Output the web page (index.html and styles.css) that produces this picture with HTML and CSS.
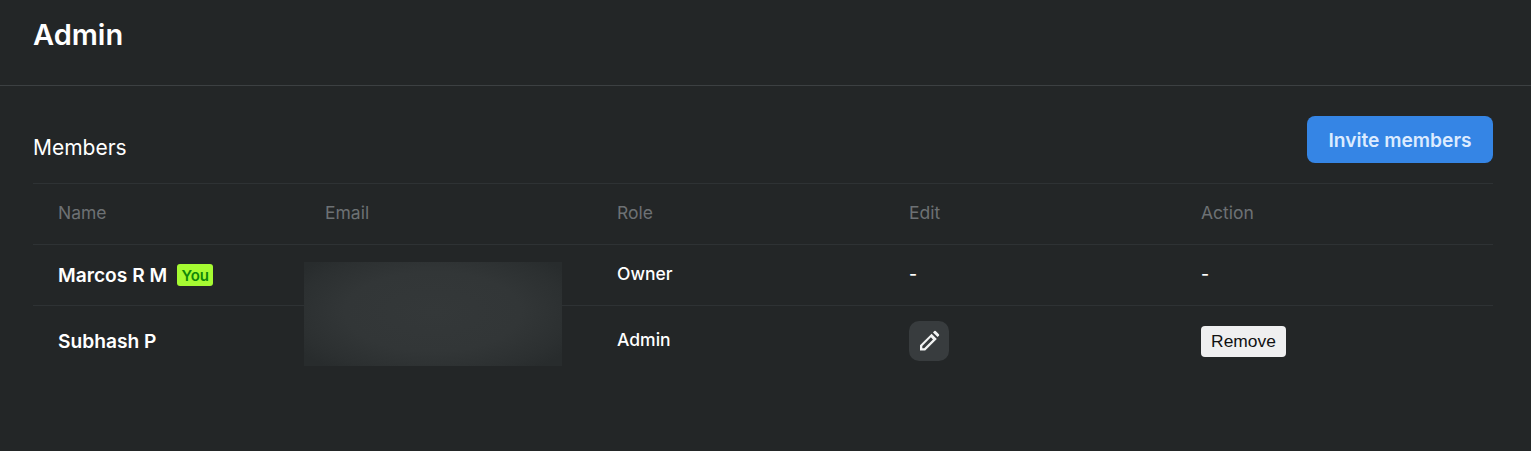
FILE: index.html
```html
<!DOCTYPE html>
<html lang="en">
<head>
<meta charset="utf-8">
<title>Admin</title>
<link rel="stylesheet" href="styles.css">
</head>
<body>
<header class="page-header"><h1 class="page-title">Admin</h1></header>
<main class="content">
  <div class="toolbar">
    <h2 class="section-title">Members</h2>
    <button class="btn-invite" type="button">Invite members</button>
  </div>
  <div class="members">
    <div class="row row-head">
      <div class="cell">Name</div>
      <div class="cell">Email</div>
      <div class="cell">Role</div>
      <div class="cell">Edit</div>
      <div class="cell">Action</div>
    </div>
    <div class="row row-owner">
      <div class="cell name">Marcos R M<span class="badge">You</span></div>
      <div class="cell"></div>
      <div class="cell">Owner</div>
      <div class="cell">-</div>
      <div class="cell">-</div>
    </div>
    <div class="row row-admin">
      <div class="cell name">Subhash P</div>
      <div class="cell"></div>
      <div class="cell">Admin</div>
      <div class="cell">
        <button class="btn-edit" type="button" aria-label="Edit">
          <svg viewBox="0 0 24 24" width="24" height="24" aria-hidden="true">
            <path fill="#f2f3f3" fill-rule="evenodd" d="M3 21.5v-5.2L14.6 4.7l5.2 5.2L8.2 21.5H3Zm2.3-2.3h1.9L16 10.4 13.9 8.3 5.3 16.9v2.3Z"/>
            <path fill="#f2f3f3" d="M16 3.4l1.3-1.3a1 1 0 0 1 1.4 0l3.2 3.2a1 1 0 0 1 0 1.4L20.6 8 16 3.4Z"/>
          </svg>
        </button>
      </div>
      <div class="cell"><button class="btn-remove" type="button">Remove</button></div>
    </div>
    <div class="redaction"></div>
  </div>
</main>
</body>
</html>
```
FILE: styles.css
```css
* { box-sizing: border-box; }
html, body { margin: 0; height: 100%; }
body {
  background: #232627;
  color: #fff;
  font-family: Inter, "Liberation Sans", sans-serif;
  overflow: hidden;
}
.page-header {
  height: 86px;
  padding: 16px 33px 0;
  border-bottom: 1px solid #3c4042;
}
.page-title {
  margin: 0;
  font-size: 29px;
  line-height: 38px;
  font-weight: 600;
}
.content { padding: 30px 38px 0 33px; }
.toolbar {
  display: flex;
  justify-content: space-between;
  align-items: flex-start;
  height: 68px;
  border-bottom: 1px solid #2e3234;
}
.section-title {
  margin: 19px 0 0;
  font-size: 21px;
  line-height: 26px;
  font-weight: 400;
}
.btn-invite {
  width: 186px;
  height: 47px;
  border: 0;
  border-radius: 8px;
  background: #3585e5;
  color: #dcebff;
  font: 600 19.2px Inter, sans-serif;
}
.members { position: relative; }
.row {
  display: grid;
  grid-template-columns: 267px 292px 292px 292px 317px;
  align-items: center;
  font-size: 17.5px;
  font-weight: 500;
}
.row > .cell { padding-left: 25px; }
.row-head {
  height: 61px;
  padding-bottom: 4px;
  color: #6d7174;
  font-weight: 400;
  border-bottom: 1px solid #2e3234;
}
.row-owner {
  height: 61px;
  padding-bottom: 4px;
  border-bottom: 1px solid #2e3234;
}
.row-admin { height: 70px; padding-bottom: 3px; }
.cell.name {
  display: flex;
  align-items: center;
  font-size: 19.2px;
  font-weight: 600;
}
.row-owner .name { padding-top: 4px; }
.row-admin .name { padding-top: 3px; }
.badge {
  display: inline-block;
  margin-left: 10px;
  width: 36px;
  height: 22px;
  text-align: center;
  line-height: 24px;
  font-size: 15px;
  font-weight: 600;
  color: #0d8608;
  background: #a6fb32;
  border-radius: 3px;
}
.btn-edit {
  display: flex;
  align-items: center;
  justify-content: center;
  width: 40px;
  height: 40px;
  margin-top: 3px;
  padding: 0;
  border: 0;
  border-radius: 10px;
  background: #383c3e;
}
.btn-remove {
  display: block;
  width: 85px;
  height: 31px;
  margin-top: 3px;
  padding: 0;
  border: 0;
  border-radius: 4px;
  background: #efeff0;
  color: #111;
  font: 400 17.4px "Liberation Sans", Arial, sans-serif;
}
.redaction {
  position: absolute;
  left: 271px;
  top: 78px;
  width: 258px;
  height: 104px;
  background: radial-gradient(ellipse 62% 70% at 50% 48%, #343839 0%, #323637 55%, #2c3031 85%, #282c2d 100%);
}
```
